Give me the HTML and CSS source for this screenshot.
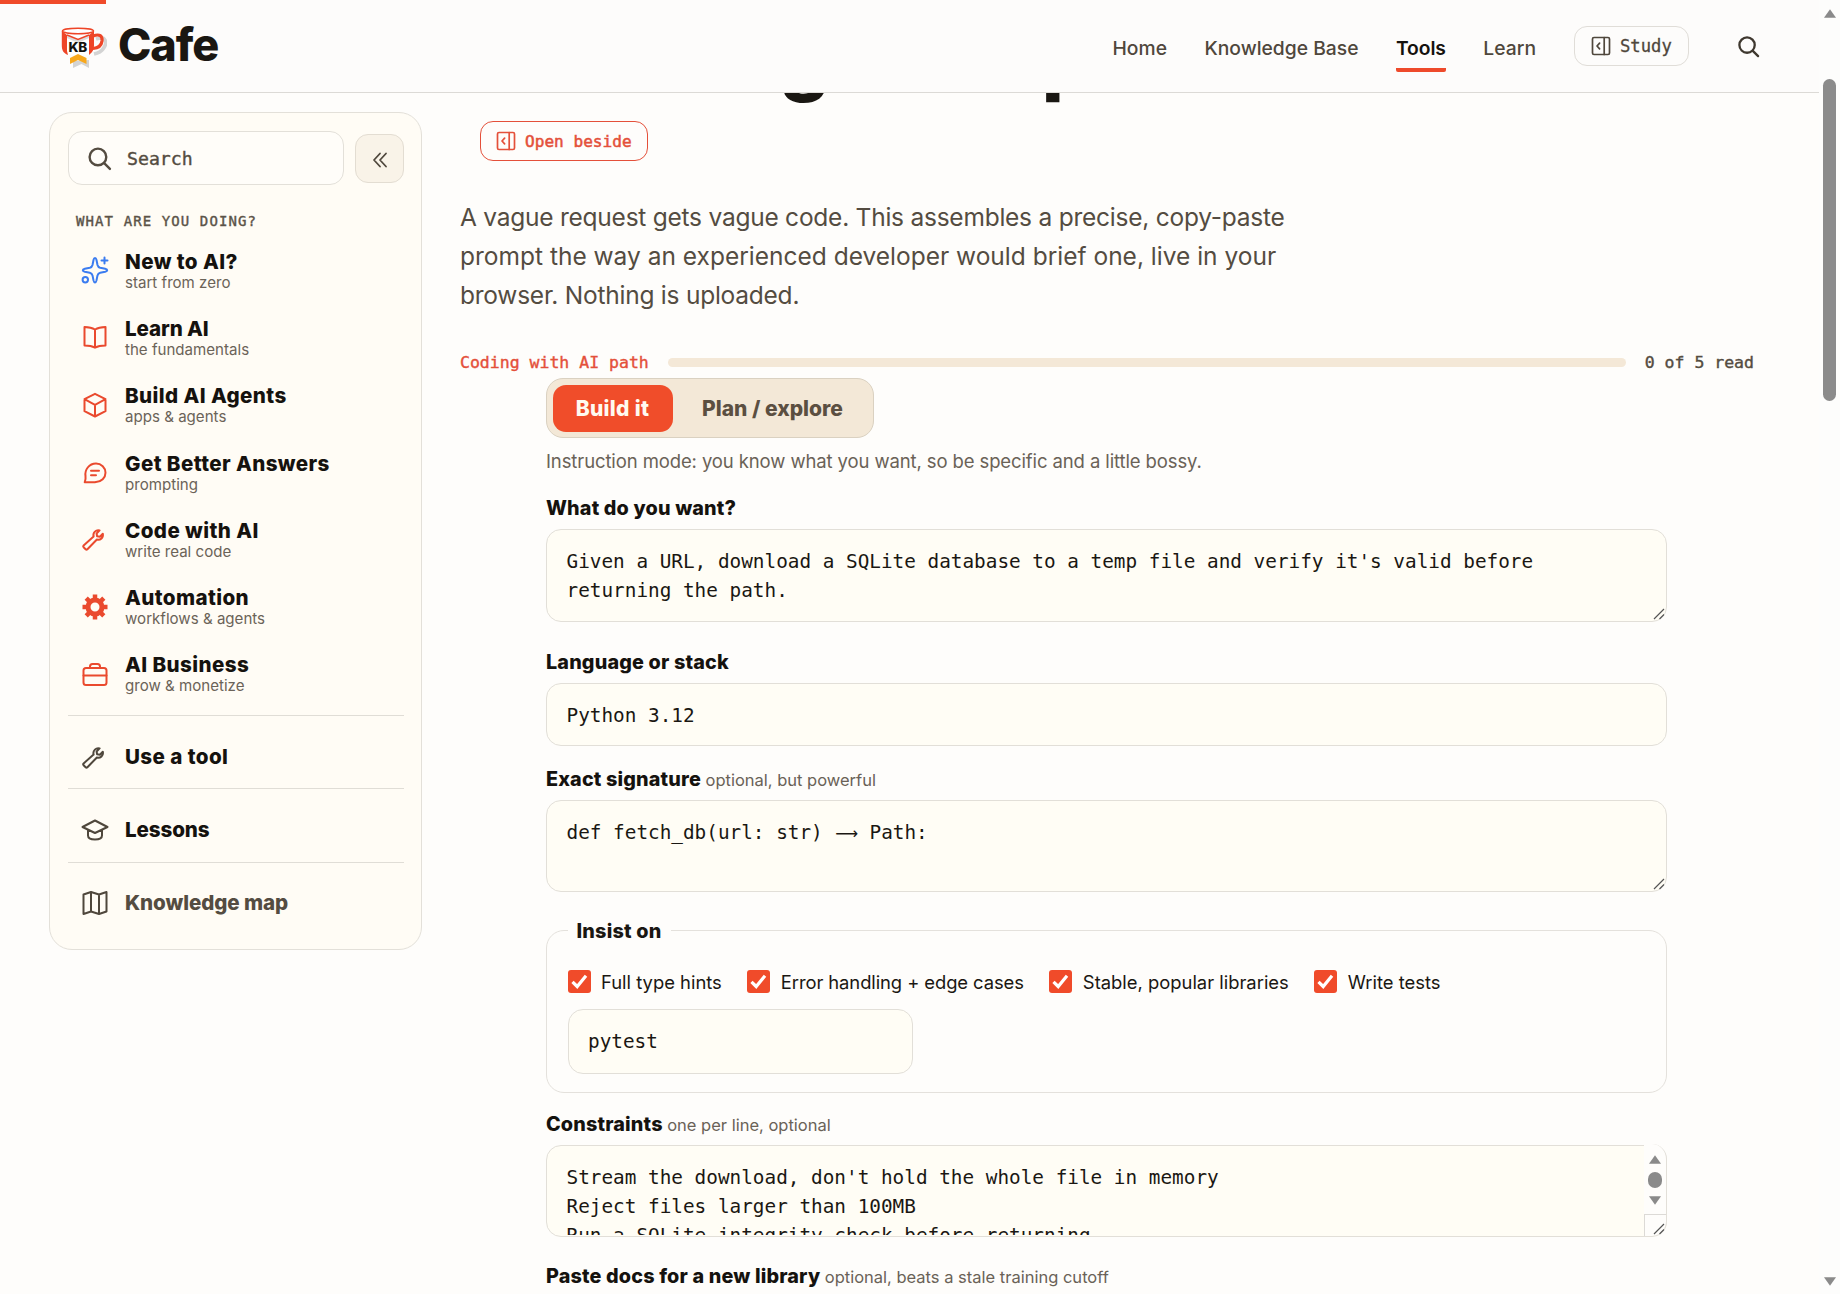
FILE: index.html
```
<!DOCTYPE html>
<html lang="en">
<head>
	<meta charset="utf-8">
	<meta name="viewport" content="width=device-width, initial-scale=1.0">
	<title>AI Coding Prompt Builder - KB Cafe</title>
	<link rel="stylesheet" href="styles.css">
</head>
<body>

	<!-- icons used more than once -->
	<svg width="0" height="0" class="sprite">
		<symbol id="i-search" viewBox="0 0 24 24"><circle cx="10.5" cy="10.5" r="8"/><path d="M16.5 16.5L22 22"/></symbol>
		<symbol id="i-panel" viewBox="0 0 20 20"><rect x="1.5" y="1.5" width="17" height="17" rx="1.5"/><path d="M13.2 1.5v17M8.6 7.2L6 10l2.6 2.8"/></symbol>
		<symbol id="i-wrench" viewBox="0 0 28 28"><path transform="translate(0 3)" d="M21.800 5.800c.4 1.700 0 3.400-1.300 4.600-1.300 1.200-3 1.600-4.600 1.100L6.400 21.200a1.300 1.300 0 0 1-1.800 0l-2-2a1.300 1.300 0 0 1 0-1.800l10-8.800c-.5-1.800 0-3.700 1.300-5 1.300-1.300 3-1.700 4.700-1.200l-3 3.100.5 2.800 2.800.5z"/></symbol>
		<symbol id="i-grip" viewBox="0 0 12 12"><path d="M1 11L11 1M6.500 11L11 6.500"/></symbol>
		<symbol id="i-tick" viewBox="0 0 23 23"><path d="M4.500 11.800l4.700 4.700L18 5.800"/></symbol>
	</svg>

	<div class="page">
		<div class="read-bar"></div>
		<header class="header">
			<a class="brand">
				<svg class="logo" viewBox="0 0 46 42">
					<path d="M35 12c10-4 12 4 7 10-2 3-5 4-9 5" fill="none" stroke="#d3d3d3" stroke-width="3.600"/>
					<path d="M12 34v7l8.500-4 7.500 4v-8z" fill="#d3d3d3"/>
					<path d="M1.500 4v16c0 5 2 7 4 8h23c3-2 4-5 4-9V4z" fill="#fff"/>
					<path d="M.8 4L6 8v16l1 4C2 26 .8 23 .8 18zM33 4l-5 4v20c4-3 5-6 5-10z" fill="#ee4527"/>
					<path d="M6 8l11 5 11-5v3l-11 5-11-5z" fill="#dcdcdc"/>
					<path d="M6 8l11 4.500L28 8" fill="none" stroke="#ee4527" stroke-width="1.500"/>
					<ellipse cx="17" cy="4" rx="15.500" ry="2.700" fill="#fff" stroke="#ee4527" stroke-width="1.500"/>
					<path d="M32 9c7-2.500 9.500 0 9 5-.5 4-3 7-9 7.500" fill="none" stroke="#ee4527" stroke-width="3.200"/>
					<text x="7.500" y="24.500" class="logo-text">KB</text>
					<path d="M9 31l8-4 8.500 4v6l-8.500-4-8 4z" fill="#f8a81c"/>
				</svg>
				<span class="brand-name">Cafe</span>
			</a>
			<nav class="nav">
				<a>Home</a>
				<a>Knowledge Base</a>
				<a class="active">Tools</a>
				<a>Learn</a>
			</nav>
			<button class="study"><svg class="icon panel"><use href="#i-panel"/></svg>Study</button>
			<svg class="icon header-search"><use href="#i-search"/></svg>
		</header>

		<div class="layout">
			<aside class="sidebar">
				<div class="side-top">
					<div class="search"><svg class="icon"><use href="#i-search"/></svg>Search</div>
					<button class="collapse"><svg class="icon" viewBox="0 0 16 16"><path d="M8 1.500L2 8l6 6.500M14 1.500L8 8l6 6.500"/></svg></button>
				</div>
				<div class="side-label">WHAT ARE YOU DOING?</div>
				<ul class="menu">
					<li class="item">
						<svg class="icon blue" viewBox="0 0 28 28"><path d="M14 2c.9 0 1.200.7 1.500 2l1 5c.4 1.700 1 2.300 2.700 2.700l5 1c1.300.3 2 .6 2 1.500s-.7 1.200-2 1.500l-5 1c-1.700.4-2.300 1-2.700 2.700l-1 5c-.3 1.300-.6 2-1.500 2s-1.200-.7-1.500-2l-1-5c-.4-1.700-1-2.300-2.700-2.700l-5-1c-1.300-.3-2-.6-2-1.500s.7-1.200 2-1.500l5-1c1.700-.4 2.300-1 2.700-2.700l1-5c.3-1.300.6-2 1.500-2zM23.500 1.500v6M20.500 4.500h6"/><circle cx="4.300" cy="23.700" r="2.700"/></svg>
						<div><b>New to AI?</b><small>start from zero</small></div>
					</li>
					<li class="item">
						<svg class="icon" viewBox="0 0 28 28"><path d="M14 6.500C11 4.800 7.500 4.200 3.500 4v18.500c4 0 7.500.5 10.500 2.200 3-1.700 6.500-2.200 10.500-2.200V4c-4 .2-7.500.8-10.500 2.500zM14 6.500v18"/></svg>
						<div><b class="tight">Learn AI</b><small>the fundamentals</small></div>
					</li>
					<li class="item">
						<svg class="icon" viewBox="0 0 28 28"><path d="M14 2.800l10.500 5.400v12L14 25.500 3.500 20.200v-12zM3.500 8.200L14 13.800l10.500-5.600M14 13.800v11.700"/></svg>
						<div><b>Build AI Agents</b><small>apps &amp; agents</small></div>
					</li>
					<li class="item">
						<svg class="icon low" viewBox="0 0 28 28"><path d="M15 4.500a9.500 9.200 0 0 1 0 18.400c-2.500.4-7 .3-11.300.4 1-2 1.200-3.200.8-6.300C3.500 11 8 4.500 15 4.500zM10 11.800h8M10 16.200h5"/></svg>
						<div><b>Get Better Answers</b><small>prompting</small></div>
					</li>
					<li class="item">
						<svg class="icon"><use href="#i-wrench"/></svg>
						<div><b>Code with AI</b><small>write real code</small></div>
					</li>
					<li class="item">
						<svg class="icon gear" viewBox="0 0 28 28"><circle cx="14" cy="14" r="7"/><path d="M14 1.500v5M14 21.500v5M1.500 14h5M21.500 14h5M5.200 5.200l3.500 3.500M19.300 19.300l3.500 3.500M5.200 22.800l3.500-3.500M19.300 8.700l3.500-3.500"/></svg>
						<div><b>Automation</b><small>workflows &amp; agents</small></div>
					</li>
					<li class="item">
						<svg class="icon" viewBox="0 0 28 28"><rect x="2.500" y="8" width="23" height="17" rx="2.500"/><path d="M9 8V6.500A2.500 2.500 0 0 1 11.500 4h5A2.500 2.500 0 0 1 19 6.500V8M2.500 15.500h23"/></svg>
						<div><b>AI Business</b><small>grow &amp; monetize</small></div>
					</li>
				</ul>
				<div class="side-section item">
					<svg class="icon"><use href="#i-wrench"/></svg>
					<b>Use a tool</b>
				</div>
				<div class="side-section item">
					<svg class="icon" viewBox="0 0 28 28"><path d="M14 4.500L26.500 11 14 17 1.500 11zM7 14v5.500c0 2.500 3 4 7 4s7-1.500 7-4V14"/></svg>
					<b class="tight">Lessons</b>
				</div>
				<div class="side-section item">
					<svg class="icon" viewBox="0 0 28 28"><path d="M2.500 5.500L10 3l8 2.500L25.500 3v19.500L18 25l-8-2.500L2.500 25zM10 3v19.500M18 5.500V25"/></svg>
					<b class="tight map">Knowledge map</b>
				</div>
			</aside>

			<main class="main">
				<h1 class="title">AI Coding Prompt Builder</h1>
				<button class="open-beside"><svg class="icon panel"><use href="#i-panel"/></svg>Open beside</button>
				<p class="lead"><span class="squeeze">A vague request gets vague code. This assembles a precise, copy-paste</span><br>prompt the way an experienced developer would brief one, live in your<br><span class="squeeze">browser. Nothing is uploaded.</span></p>
				<div class="path">
					<span class="path-name">Coding with AI path</span>
					<span class="path-track"></span>
					<span>0 of 5 read</span>
				</div>

				<form class="form">
					<div class="toggle">
						<button type="button" class="on">Build it</button>
						<button type="button" class="off">Plan / explore</button>
					</div>
					<p class="hint">Instruction mode: you know what you want, so be specific and a little bossy.</p>

					<label class="label l-want">What do you want?</label>
					<div class="field want">Given a URL, download a SQLite database to a temp file and verify it's valid before<br>returning the path.<svg class="grip"><use href="#i-grip"/></svg></div>

					<label class="label l-lang">Language or stack</label>
					<div class="field lang">Python 3.12</div>

					<label class="label l-sig">Exact signature <span>optional, but powerful</span></label>
					<div class="field sig">def fetch_db(url: str) <span class="arrow">⟶</span> Path:<svg class="grip"><use href="#i-grip"/></svg></div>

					<fieldset class="insist">
						<legend>Insist on</legend>
						<div class="checks">
							<label><i><svg><use href="#i-tick"/></svg></i>Full type hints</label>
							<label><i><svg><use href="#i-tick"/></svg></i>Error handling + edge cases</label>
							<label><i><svg><use href="#i-tick"/></svg></i>Stable, popular libraries</label>
							<label><i><svg><use href="#i-tick"/></svg></i>Write tests</label>
						</div>
						<div class="field runner">pytest</div>
					</fieldset>

					<label class="label l-cons">Constraints <span>one per line, optional</span></label>
					<div class="field cons">
						<div class="cons-text">Stream the download, don't hold the whole file in memory<br>Reject files larger than 100MB<br>Run a SQLite integrity check before returning</div>
						<div class="mini-scroll">
							<svg viewBox="1 1 10 7"><path d="M6 1l5 7H1z"/></svg>
							<i></i>
							<svg viewBox="1 1 10 7"><path d="M6 8l5-7H1z"/></svg>
							<div class="corner"><svg class="grip"><use href="#i-grip"/></svg></div>
						</div>
					</div>

					<label class="label l-docs">Paste docs for a new library <span>optional, beats a stale training cutoff</span></label>
				</form>
			</main>
		</div>
	</div>

	<div class="scrollbar">
		<svg viewBox="1 1 10 7"><path d="M6 1l5 7H1z"/></svg>
		<div class="thumb"></div>
		<svg viewBox="1 1 10 7"><path d="M6 8l5-7H1z"/></svg>
	</div>

</body>
</html>
```
FILE: styles.css
```
* {
	box-sizing: border-box;
}

body {
	margin: 0;
	height: 1294px;
	overflow: hidden;
	display: flex;
	background: #fefdfb;
	color: #1a1712;
	font-family: Inter, "Liberation Sans", sans-serif;
}

button {
	font: inherit;
	padding: 0;
	background: none;
	cursor: pointer;
}

.sprite {
	position: absolute;
}

.icon {
	flex: none;
	fill: none;
	stroke: currentColor;
	stroke-width: 2;
	stroke-linecap: round;
	stroke-linejoin: round;
}

.page {
	width: 1819px;
	height: 1294px;
	overflow: hidden;
	position: relative;
}

.read-bar {
	position: absolute;
	top: 0;
	left: 0;
	z-index: 3;
	width: 106px;
	height: 4px;
	background: #f04b2a;
}

/* header */
.header {
	position: relative;
	z-index: 2;
	height: 93px;
	display: flex;
	align-items: center;
	padding: 0 59px 0 61px;
	background: #fdfcfb;
	border-bottom: 1px solid #dcdad6;
}

.brand {
	display: flex;
	align-items: center;
	margin-right: auto;
}

.logo {
	width: 46px;
	height: 42px;
	margin: 4px 11px 0 0;
}

.logo-text {
	font: 800 13.5px Inter, sans-serif;
	letter-spacing: -0.3px;
	fill: #15120e;
}

.brand-name {
	font-size: 45px;
	font-weight: 800;
	letter-spacing: -1.100px;
	line-height: 48px;
	margin-top: -3px;
}

.nav {
	display: flex;
	gap: 37.5px;
	font-size: 19.3px;
	font-weight: 500;
	color: #4f473c;
}

.nav a {
	line-height: 41px;
	margin-top: 7px;
	height: 44px;
	border-bottom: 4px solid transparent;
}

.nav .active {
	color: #15120e;
	font-weight: 600;
	letter-spacing: -0.1px;
	border-radius: 2px;
	border-color: #ee4a2b;
}

.study {
	display: flex;
	align-items: center;
	gap: 9px;
	width: 115px;
	height: 40px;
	margin: 0 48px 0 38px;
	padding-left: 16px;
	border: 1.5px solid #e0ddd8;
	border-radius: 13px;
	color: #4f473c;
	font: 17.2px "DejaVu Sans Mono", monospace;
	-webkit-text-stroke: 0.3px;
}

.panel {
	width: 20px;
	height: 20px;
	stroke-width: 1.7;
}

.header-search {
	width: 23px;
	height: 23px;
	color: #3f382f;
	stroke-width: 2.4;
}

/* sidebar */
.layout {
	display: flex;
	align-items: flex-start;
	padding: 19px 65px 0 49px;
}

.sidebar {
	width: 373px;
	height: 838px;
	padding: 18px 17px 18px 18px;
	border: 1.5px solid #e3e0d9;
	border-radius: 23px;
	background: #fffcf5;
}

.side-top {
	display: flex;
	align-items: center;
	gap: 11px;
}

.search {
	width: 276px;
	height: 54px;
	display: flex;
	align-items: center;
	gap: 15px;
	padding-left: 18px;
	border: 1.5px solid #e3e0d9;
	border-radius: 14px;
	background: #fffdf9;
	color: #544c41;
	font: 18.2px "DejaVu Sans Mono", monospace;
	-webkit-text-stroke: 0.4px;
}

.search .icon {
	width: 25px;
	height: 25px;
	stroke-width: 2.3;
}

.collapse {
	width: 49px;
	height: 49px;
	border: 1.5px solid #e3ddd2;
	border-radius: 13px;
	background: #f9f3e8;
	color: #4f473c;
}

.collapse .icon {
	width: 16px;
	height: 16px;
	vertical-align: middle;
	stroke-width: 1.8;
}

.side-label {
	margin: 28px 0 8.5px 8px;
	color: #5b5348;
	font: 14px/16px "DejaVu Sans Mono", monospace;
	letter-spacing: 1.1px;
	-webkit-text-stroke: 0.4px;
}

.menu {
	list-style: none;
	margin: 0;
	padding: 0 0 6.5px;
}

.item {
	display: flex;
	align-items: center;
	height: 67.3px;
	padding-left: 13px;
}

.item .icon {
	width: 28px;
	height: 28px;
	margin: 0 16px 2px 0;
	color: #ea4a2e;
}

.item .low {
	margin-bottom: 0;
}

.item .blue {
	color: #3b7cf0;
}

.item .gear circle {
	stroke-width: 5;
}

.item .gear {
	stroke-width: 4.5;
	stroke-linecap: butt;
}

.item b {
	display: block;
	font-size: 20.6px;
	font-weight: 800;
	line-height: 22px;
	letter-spacing: 0.4px;
	color: #15120e;
}

.item .tight {
	letter-spacing: -0.1px;
}

.item small {
	display: block;
	font-size: 15.100px;
	line-height: 19px;
	color: #6b6358;
}

.side-section {
	height: 73.3px;
	padding-top: 9px;
	border-top: 1.5px solid #e0ddd6;
}

.side-section .icon {
	margin-bottom: 0;
	color: #4f473c;
}

.item .map {
	color: #544c41;
}

/* main column */
.main {
	flex: 1;
	margin-left: 38px;
}

.title {
	margin: -96px 0 0;
	font-size: 78px;
	font-weight: 800;
	line-height: 84px;
	letter-spacing: -0.3px;
	word-spacing: -5px;
	white-space: nowrap;
}

.open-beside {
	display: flex;
	align-items: center;
	gap: 9px;
	width: 168px;
	height: 40px;
	margin: 21px 0 0 20px;
	padding-left: 15px;
	border: 1.5px solid #e4503a;
	border-radius: 13px;
	color: #e4503a;
	font: 16.1px "DejaVu Sans Mono", monospace;
	-webkit-text-stroke: 0.5px;
}

.lead {
	margin: 37px 0 0;
	font-size: 24.5px;
	line-height: 38.800px;
	color: #544c41;
	white-space: nowrap;
}

.squeeze {
	letter-spacing: -0.24px;
}

.path {
	display: flex;
	align-items: center;
	gap: 19px;
	height: 24px;
	margin-top: 36px;
	color: #544c41;
	font: 16.5px/25px "DejaVu Sans Mono", monospace;
	-webkit-text-stroke: 0.4px;
}

.path-name {
	color: #e4503a;
}

.path-track {
	flex: 1;
	height: 9px;
	border-radius: 5px;
	background: #f4e8d7;
}

.form {
	width: 1121px;
	margin: 4px 0 0 86px;
}

.toggle {
	display: flex;
	width: 328px;
	height: 60px;
	padding: 5.500px;
	border: 1.5px solid #dad1c1;
	border-radius: 17px;
	background: #f3e8d7;
}

.toggle button {
	flex: none;
	border: 0;
	border-radius: 13px;
	font-size: 21px;
	font-weight: 800;
	color: #5b4f41;
}

.toggle .on {
	width: 120px;
	background: #f04d2a;
	color: #fffaf0;
	letter-spacing: 0.3px;
}

.toggle .off {
	width: 200px;
}

.hint {
	margin: 11px 0 0;
	font-size: 18.500px;
	line-height: 24px;
	letter-spacing: -0.11px;
	color: #6a6257;
	white-space: nowrap;
}

.label {
	display: block;
	height: 43px;
	padding-top: 10px;
	font-size: 19.800px;
	font-weight: 800;
	line-height: 24px;
	letter-spacing: 0.16px;
	white-space: nowrap;
	color: #15120e;
}

.label span {
	font-size: 16.500px;
	font-weight: 400;
	letter-spacing: 0;
	color: #6a6257;
}

.l-want {
	margin-top: 13px;
}

.l-lang {
	margin-top: 18px;
}

.l-sig {
	margin-top: 10.5px;
}

.l-cons {
	margin-top: 9.5px;
}

.l-docs {
	margin-top: 17px;
}

.field {
	position: relative;
	padding: 17px 19.5px;
	border: 1.5px solid #e2dfd8;
	border-radius: 15px;
	background: #fffdf5;
	font: 19.350px/29px "DejaVu Sans Mono", monospace;
	white-space: nowrap;
}

.want {
	height: 93px;
}

.lang {
	height: 63px;
}

.sig {
	height: 92px;
}

.arrow {
	display: inline-block;
	width: 23.5px;
	text-indent: 1px;
	font-family: "DejaVu Sans", sans-serif;
	font-size: 16px;
}

.grip {
	position: absolute;
	right: 1px;
	bottom: 1px;
	width: 12px;
	height: 12px;
	fill: none;
	stroke: #555;
	stroke-width: 1.2;
}

.insist {
	min-width: 0;
	height: 174px;
	margin: 27px 0 0;
	padding: 27px 20.5px 0;
	border: 1.5px solid #e4e1dc;
	border-radius: 18px;
}

.insist legend {
	padding: 0 9px;
	font-size: 19.800px;
	font-weight: 800;
	line-height: 24px;
	letter-spacing: 0.2px;
}

.checks {
	display: flex;
	gap: 25.5px;
	font-size: 18.4px;
	height: 24px;
}

.checks label {
	display: flex;
	align-items: center;
	gap: 10.5px;
	white-space: nowrap;
}

.checks label:nth-child(2) {
	letter-spacing: -0.08px;
}

.checks i {
	width: 23px;
	height: 23px;
	border-radius: 3px;
	background: #f04b2a;
}

.checks svg {
	display: block;
	width: 23px;
	height: 23px;
	fill: none;
	stroke: #fff;
	stroke-width: 3.200;
}

.runner {
	width: 345px;
	height: 65px;
	margin-top: 15.5px;
}

.cons {
	height: 92px;
	padding: 0;
}

.cons-text {
	height: 89px;
	padding: 17px 19.5px;
	overflow: hidden;
}

.mini-scroll {
	position: absolute;
	top: -2px;
	right: -1px;
	width: 23px;
	height: 92px;
	display: flex;
	flex-direction: column;
	align-items: center;
	gap: 8px;
	padding-top: 11px;
	background: #fefdfb;
	border-right: 1.5px solid #e2dfd8;
	border-radius: 0 15px 15px 0;
}

.mini-scroll svg,
.scrollbar svg {
	width: 12px;
	height: 9px;
	fill: #8a8a8a;
}

.mini-scroll i {
	width: 14px;
	height: 16px;
	border-radius: 7px;
	background: #8a8a8a;
}

.corner {
	position: absolute;
	right: 0;
	bottom: 0;
	width: 22px;
	height: 22px;
	border-top: 1px solid #dcdad6;
	border-left: 1px solid #dcdad6;
}

.corner .grip {
	width: 12px;
	height: 12px;
	fill: none;
}

/* window scrollbar */
.scrollbar {
	width: 21px;
	display: flex;
	flex-direction: column;
	align-items: center;
	padding: 9px 0 8px;
	background: #fdfdfc;
}

.thumb {
	width: 13px;
	height: 322px;
	margin: 61px 0 auto;
	border-radius: 7px;
	background: #8b8b8b;
}
```
